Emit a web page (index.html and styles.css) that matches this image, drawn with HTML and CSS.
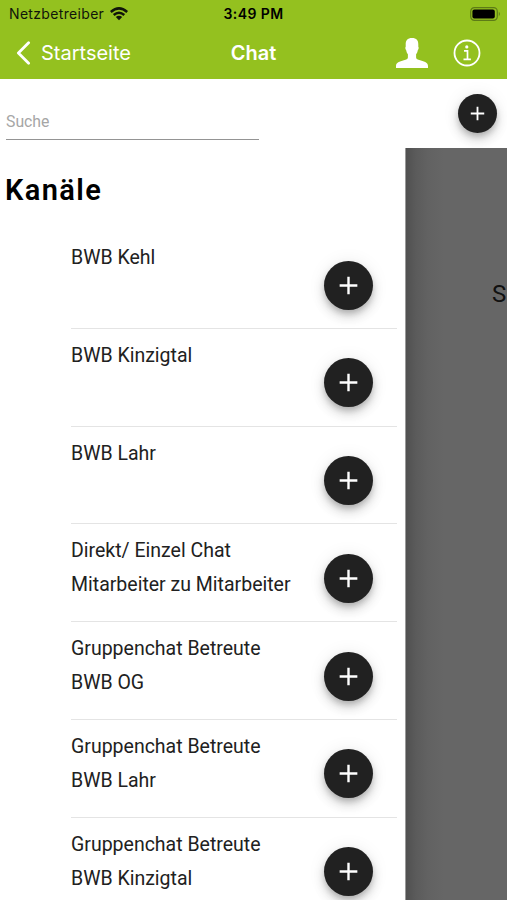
FILE: index.html
```html
<!DOCTYPE html>
<html lang="de">
<head>
<meta charset="utf-8">
<meta name="viewport" content="width=device-width, initial-scale=1">
<title>Chat</title>
<link rel="stylesheet" href="styles.css">
</head>
<body>
<div class="app">
  <header class="header">
    <div class="status">
      <div class="carrier"><span>Netzbetreiber</span>
        <svg class="wifi" viewBox="0 0 18 14" aria-hidden="true"><path d="M.8 5Q9-2.200 17.200 5M3.700 8Q9 3.400 14.300 8" fill="none" stroke="#10150a" stroke-width="2.500"/><path d="M5.800 10Q9 7.300 12.200 10L9 13.300Z" fill="#10150a"/></svg>
      </div>
      <time class="clock">3:49 PM</time>
      <svg class="battery" viewBox="0 0 31 14" aria-hidden="true"><rect x=".7" y=".7" width="26.6" height="12.6" rx="3.7" fill="none" stroke="#5d7b17" stroke-width="1.2"/><rect x="2.4" y="2.4" width="22.4" height="9.2" rx="2" fill="#000"/><path d="M28.8 4.8Q31 7 28.8 9.2Z" fill="#5d7b17"/></svg>
    </div>
    <nav class="nav">
      <a class="back"><svg class="chevron" viewBox="0 0 15 24" aria-hidden="true"><path d="M12.6 1.8 2.4 12l10.2 10.2" fill="none" stroke="#fff" stroke-width="2.8" stroke-linecap="round" stroke-linejoin="round"/></svg><span>Startseite</span></a>
      <h1 class="title">Chat</h1>
      <div class="actions">
        <svg class="person" viewBox="0 0 32 30" aria-hidden="true"><path d="M16 0C11.500 0 9.500 2.200 9.700 6.800v2c-.8.600-.3 2.800.6 3.600.3 1.800.8 2.800 1.600 3.800v3.200c0 1.500-1.600 2-4 2.800C3.500 23.600 0 24.500 0 28v2h32v-2c0-3.500-3.500-4.400-7.900-5.800-2.400-.8-4-1.300-4-2.800v-3.200c.8-1 1.300-2 1.600-3.800.900-.8 1.400-3 .6-3.600v-2C22.500 2.200 20.500 0 16 0Z" fill="#fff"/></svg>
        <svg class="info" viewBox="0 0 28 28" aria-hidden="true"><circle cx="14" cy="14" r="12.500" fill="none" stroke="#fff" stroke-width="1.800"/><circle cx="13.800" cy="7.900" r="1.600" fill="#fff"/><path d="M11 11.800h3.500v8.500M10.500 20.400h7.400" fill="none" stroke="#fff" stroke-width="1.700"/></svg>
      </div>
    </nav>
  </header>
  <section class="toolbar">
    <input class="search" type="text" placeholder="Suche" aria-label="Suche">
    <button class="fab small" aria-label="Neu"><svg viewBox="0 0 24 24"><path d="M12 3.500v17M3.500 12h17"/></svg></button>
  </section>
  <main class="content">
    <aside class="drawer">
      <h2 class="heading">Kanäle</h2>
      <ul class="channels">
        <li class="channel"><span class="name">BWB Kehl</span><button class="fab" aria-label="Hinzufügen"><svg viewBox="0 0 24 24"><path d="M12 3.500v17M3.500 12h17"/></svg></button></li>
        <li class="channel"><span class="name">BWB Kinzigtal</span><button class="fab" aria-label="Hinzufügen"><svg viewBox="0 0 24 24"><path d="M12 3.500v17M3.500 12h17"/></svg></button></li>
        <li class="channel"><span class="name">BWB Lahr</span><button class="fab" aria-label="Hinzufügen"><svg viewBox="0 0 24 24"><path d="M12 3.500v17M3.500 12h17"/></svg></button></li>
        <li class="channel"><span class="name">Direkt/ Einzel Chat<br>Mitarbeiter zu Mitarbeiter</span><button class="fab" aria-label="Hinzufügen"><svg viewBox="0 0 24 24"><path d="M12 3.500v17M3.500 12h17"/></svg></button></li>
        <li class="channel"><span class="name">Gruppenchat Betreute<br>BWB OG</span><button class="fab" aria-label="Hinzufügen"><svg viewBox="0 0 24 24"><path d="M12 3.500v17M3.500 12h17"/></svg></button></li>
        <li class="channel"><span class="name">Gruppenchat Betreute<br>BWB Lahr</span><button class="fab" aria-label="Hinzufügen"><svg viewBox="0 0 24 24"><path d="M12 3.500v17M3.500 12h17"/></svg></button></li>
        <li class="channel"><span class="name">Gruppenchat Betreute<br>BWB Kinzigtal</span><button class="fab" aria-label="Hinzufügen"><svg viewBox="0 0 24 24"><path d="M12 3.500v17M3.500 12h17"/></svg></button></li>
      </ul>
    </aside>
    <div class="backdrop"><span class="hint">S</span></div>
  </main>
</div>
</body>
</html>
```
FILE: styles.css
```css
* { box-sizing: border-box; }
body { margin: 0; background: #fff; font-family: Roboto, sans-serif; color: #212121; }
.app { display: flex; flex-direction: column; height: 900px; overflow: hidden; }

.header { flex: none; height: 79px; background: #94c11f; font-family: Inter, sans-serif; }
.status { display: grid; grid-template-columns: 1fr auto 1fr; align-items: center; height: 27px; padding: 0 6px 0 9px; color: #10150a; }
.carrier { display: flex; align-items: center; gap: 6px; font-size: 14px; letter-spacing: .33px; }
.wifi { width: 18px; height: 14px; }
.clock { margin-right: 3px; font-size: 14px; font-weight: 600; letter-spacing: .4px; color: #000; }
.battery { width: 31px; height: 14px; justify-self: end; }
.nav { display: grid; grid-template-columns: 1fr auto 1fr; align-items: center; height: 51px; padding: 0 26px 0 16px; color: #fff; }
.back { display: flex; align-items: center; gap: 10px; font-size: 20px; }
.chevron { width: 15px; height: 24px; }
.title { margin: 0 0 0 10px; font-size: 20px; font-weight: 600; }
.actions { display: flex; align-items: center; justify-content: flex-end; gap: 25px; }
.person { width: 32px; height: 30px; }
.info { width: 28px; height: 28px; }

.toolbar { flex: none; display: flex; justify-content: space-between; height: 69px; padding: 15px 10px 0 6px; }
.search { width: 253px; height: 46px; padding: 10px 0 0; border: 0; border-bottom: 1px solid #949494; outline: 0; background: transparent; font: 15.800px Roboto, sans-serif; }
.search::placeholder { color: #a6a6a6; opacity: 1; }

.fab { flex: none; display: flex; align-items: center; justify-content: center; width: 49px; height: 49px; padding: 0; border: 0; border-radius: 50%; background: #212121; box-shadow: 0 4px 6px -1px rgba(0,0,0,.2), 0 7px 12px rgba(0,0,0,.14), 0 1px 18px rgba(0,0,0,.08); }
.fab svg { width: 25px; height: 25px; fill: none; stroke: #fff; stroke-width: 2.300; }
.small { width: 39px; height: 39px; }
.small svg { width: 19px; height: 19px; }

.content { flex: 1; display: flex; min-height: 0; }
.drawer { width: 406px; background: #fff; border-right: 1px solid #999; overflow: hidden; }
.heading { margin: 0; padding: 24px 0 0 5px; height: 83px; font-size: 29px; line-height: 36px; font-weight: 600; letter-spacing: 1.400px; color: #000; }
.channels { margin: 0; padding: 0 8px 0 71px; list-style: none; }
.channel { display: flex; justify-content: space-between; height: 97.750px; padding: 10px 24px 0 0; border-bottom: 1px solid #e4e4e4; }
.name { font-size: 19.500px; line-height: 34.200px; white-space: nowrap; }
.channel .fab { margin-top: 19.700px; }
.backdrop { flex: 1; overflow: hidden; background: linear-gradient(90deg, #505050 0, #5b5b5b 10px, #626262 22px, #666 38px); }
.hint { display: block; margin: 131px 0 0 86px; font-size: 24px; line-height: 30px; color: #111; }
```
